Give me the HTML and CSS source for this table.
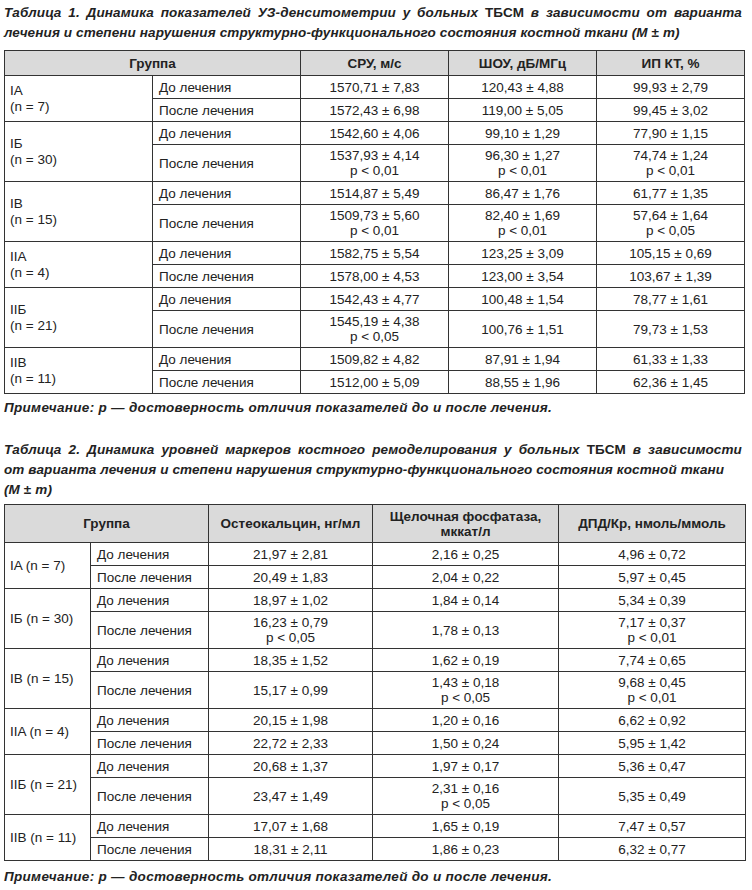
FILE: index.html
```html
<!DOCTYPE html>
<html lang="ru">
<head>
<meta charset="utf-8">
<link rel="stylesheet" href="styles.css">
</head>
<body>
<div class="page">
  <div class="title">
    <span class="line full">Таблица 1. Динамика показателей УЗ-денситометрии у больных <span class="up">ТБСМ</span> в зависимости от варианта</span>
    <span class="line">лечения и степени нарушения структурно-функционального состояния костной ткани (M <span class="up">±</span> m)</span>
  </div>
  <table class="t t1">
    <colgroup><col class="c148"><col class="c148"><col class="c148"><col class="c148"><col class="c148"></colgroup>
    <thead>
      <tr class="h1"><th colspan="2">Группа</th><th>СРУ, м/с</th><th>ШОУ, дБ/МГц</th><th>ИП КТ, %</th></tr>
    </thead>
    <tbody>
      <tr class="s"><td rowspan="2" class="g">IA<br>(n = 7)</td><td class="l">До лечения</td><td>1570,71 ± 7,83</td><td>120,43 ± 4,88</td><td>99,93 ± 2,79</td></tr>
      <tr class="s"><td class="l">После лечения</td><td>1572,43 ± 6,98</td><td>119,00 ± 5,05</td><td>99,45 ± 3,02</td></tr>
      <tr class="s"><td rowspan="2" class="g">IБ<br>(n = 30)</td><td class="l">До лечения</td><td>1542,60 ± 4,06</td><td>99,10 ± 1,29</td><td>77,90 ± 1,15</td></tr>
      <tr class="d"><td class="l">После лечения</td><td>1537,93 ± 4,14<br>p &lt; 0,01</td><td>96,30 ± 1,27<br>p &lt; 0,01</td><td>74,74 ± 1,24<br>p &lt; 0,01</td></tr>
      <tr class="s"><td rowspan="2" class="g">IB<br>(n = 15)</td><td class="l">До лечения</td><td>1514,87 ± 5,49</td><td>86,47 ± 1,76</td><td>61,77 ± 1,35</td></tr>
      <tr class="d"><td class="l">После лечения</td><td>1509,73 ± 5,60<br>p &lt; 0,01</td><td>82,40 ± 1,69<br>p &lt; 0,01</td><td>57,64 ± 1,64<br>p &lt; 0,05</td></tr>
      <tr class="s"><td rowspan="2" class="g">IIA<br>(n = 4)</td><td class="l">До лечения</td><td>1582,75 ± 5,54</td><td>123,25 ± 3,09</td><td>105,15 ± 0,69</td></tr>
      <tr class="s"><td class="l">После лечения</td><td>1578,00 ± 4,53</td><td>123,00 ± 3,54</td><td>103,67 ± 1,39</td></tr>
      <tr class="s"><td rowspan="2" class="g">IIБ<br>(n = 21)</td><td class="l">До лечения</td><td>1542,43 ± 4,77</td><td>100,48 ± 1,54</td><td>78,77 ± 1,61</td></tr>
      <tr class="d"><td class="l">После лечения</td><td>1545,19 ± 4,38<br>p &lt; 0,05</td><td>100,76 ± 1,51</td><td>79,73 ± 1,53</td></tr>
      <tr class="s"><td rowspan="2" class="g">IIB<br>(n = 11)</td><td class="l">До лечения</td><td>1509,82 ± 4,82</td><td>87,91 ± 1,94</td><td>61,33 ± 1,33</td></tr>
      <tr class="s"><td class="l">После лечения</td><td>1512,00 ± 5,09</td><td>88,55 ± 1,96</td><td>62,36 ± 1,45</td></tr>
    </tbody>
  </table>
  <p class="note">Примечание: p — достоверность отличия показателей до и после лечения.</p>

  <div class="title title2">
    <span class="line full">Таблица 2. Динамика уровней маркеров костного ремоделирования у больных <span class="up">ТБСМ</span> в зависимости</span>
    <span class="line">от варианта лечения и степени нарушения структурно-функционального состояния костной ткани</span>
    <span class="line">(M <span class="up">±</span> m)</span>
  </div>
  <table class="t t2">
    <colgroup><col class="c86"><col class="c118"><col class="c164"><col class="c186"><col class="c187"></colgroup>
    <thead>
      <tr class="h2"><th colspan="2">Группа</th><th>Остеокальцин, нг/мл</th><th>Щелочная фосфатаза,<br>мккат/л</th><th>ДПД/Кр, нмоль/ммоль</th></tr>
    </thead>
    <tbody>
      <tr class="s"><td rowspan="2" class="g">IA (n = 7)</td><td class="l">До лечения</td><td>21,97 ± 2,81</td><td>2,16 ± 0,25</td><td>4,96 ± 0,72</td></tr>
      <tr class="s"><td class="l">После лечения</td><td>20,49 ± 1,83</td><td>2,04 ± 0,22</td><td>5,97 ± 0,45</td></tr>
      <tr class="s"><td rowspan="2" class="g">IБ (n = 30)</td><td class="l">До лечения</td><td>18,97 ± 1,02</td><td>1,84 ± 0,14</td><td>5,34 ± 0,39</td></tr>
      <tr class="d"><td class="l">После лечения</td><td>16,23 ± 0,79<br>p &lt; 0,05</td><td>1,78 ± 0,13</td><td>7,17 ± 0,37<br>p &lt; 0,01</td></tr>
      <tr class="s"><td rowspan="2" class="g">IB (n = 15)</td><td class="l">До лечения</td><td>18,35 ± 1,52</td><td>1,62 ± 0,19</td><td>7,74 ± 0,65</td></tr>
      <tr class="d"><td class="l">После лечения</td><td>15,17 ± 0,99</td><td>1,43 ± 0,18<br>p &lt; 0,05</td><td>9,68 ± 0,45<br>p &lt; 0,01</td></tr>
      <tr class="s"><td rowspan="2" class="g">IIA (n = 4)</td><td class="l">До лечения</td><td>20,15 ± 1,98</td><td>1,20 ± 0,16</td><td>6,62 ± 0,92</td></tr>
      <tr class="s"><td class="l">После лечения</td><td>22,72 ± 2,33</td><td>1,50 ± 0,24</td><td>5,95 ± 1,42</td></tr>
      <tr class="s"><td rowspan="2" class="g">IIБ (n = 21)</td><td class="l">До лечения</td><td>20,68 ± 1,37</td><td>1,97 ± 0,17</td><td>5,36 ± 0,47</td></tr>
      <tr class="d"><td class="l">После лечения</td><td>23,47 ± 1,49</td><td>2,31 ± 0,16<br>p &lt; 0,05</td><td>5,35 ± 0,49</td></tr>
      <tr class="s"><td rowspan="2" class="g">IIB (n = 11)</td><td class="l">До лечения</td><td>17,07 ± 1,68</td><td>1,65 ± 0,19</td><td>7,47 ± 0,57</td></tr>
      <tr class="s"><td class="l">После лечения</td><td>18,31 ± 2,11</td><td>1,86 ± 0,23</td><td>6,32 ± 0,77</td></tr>
    </tbody>
  </table>
  <p class="note note2">Примечание: p — достоверность отличия показателей до и после лечения.</p>
</div>
</body>
</html>
```

FILE: styles.css
```css
html, body {
  margin: 0;
  padding: 0;
  background: #ffffff;
}
body {
  font-family: "Liberation Sans", Arial, Helvetica, sans-serif;
  color: #222222;
}
.page {
  padding: 3px 7px 0 4px;
}
.title {
  width: 738px;
  font-weight: bold;
  font-style: italic;
  font-size: 13.5px;
  line-height: 20px;
  letter-spacing: 0.12px;
}
.title .line {
  display: block;
  white-space: nowrap;
}
.title .line.full {
  text-align: justify;
  text-align-last: justify;
}
.title .up {
  font-style: normal;
}
.t {
  border-collapse: collapse;
  table-layout: fixed;
  width: 741px;
  margin-top: 7px;
  font-size: 13.5px;
  line-height: 15px;
}
.t th, .t td {
  border: 1px solid #333333;
  padding: 0 4px;
  text-align: center;
  vertical-align: middle;
  white-space: nowrap;
}
.t th {
  background: #dadada;
  font-weight: bold;
}
.t td.l {
  text-align: left;
  padding-left: 6px;
}
.t td.g {
  text-align: left;
  padding-left: 5px;
  line-height: 16px;
}
.h1 th { height: 24px; }
.h2 th { height: 37px; }
tr.s td { height: 22px; }
tr.d td { height: 36px; }
.c148 { width: 148px; }
.c86 { width: 86px; }
.c118 { width: 118px; }
.c164 { width: 164px; }
.c186 { width: 186px; }
.c187 { width: 187px; }
.note {
  margin: 4px 0 0 0;
  font-weight: bold;
  font-style: italic;
  font-size: 13.5px;
  line-height: 20px;
  letter-spacing: 0.3px;
}
.title2 {
  margin-top: 22px;
}
.t2 {
  margin-top: 4px;
}
.note2 {
  margin-top: 6px;
}
```
